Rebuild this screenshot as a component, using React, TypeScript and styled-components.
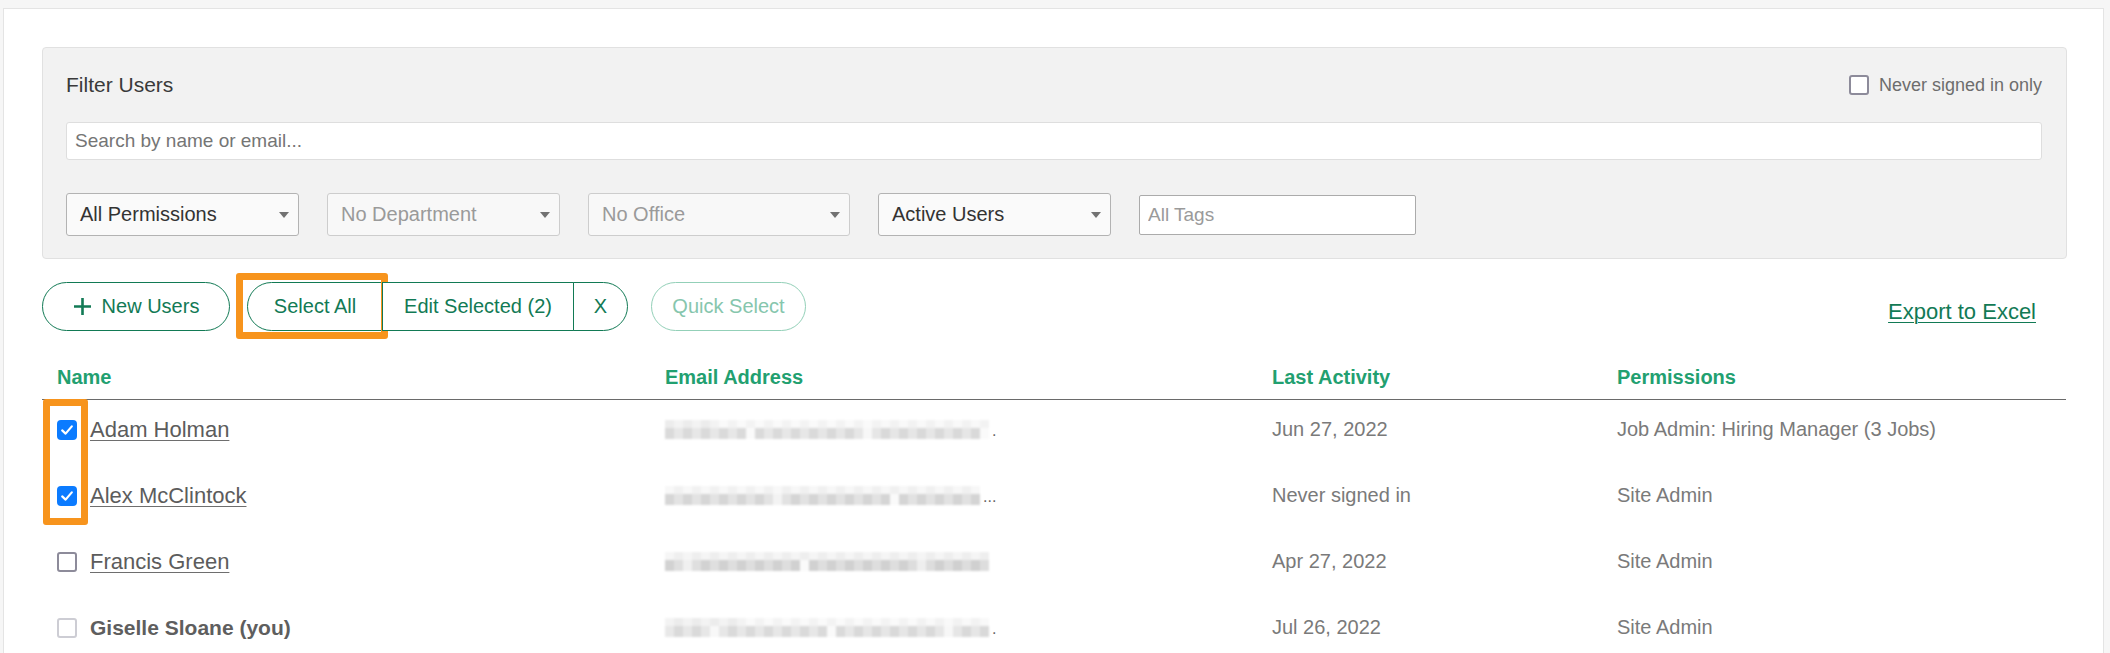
import React from "react";
import styled, { createGlobalStyle, css } from "styled-components";

const GlobalStyle = createGlobalStyle`
  *, *::before, *::after { box-sizing: border-box; }
  html, body { margin: 0; padding: 0; background: #f6f6f6; }
  body { font-family: "Liberation Sans", Arial, Helvetica, sans-serif; color: #333; }
  input { font-family: inherit; }
`;

const GREEN = "#127a55";
const HEAD_GREEN = "#22a070";
const ORANGE = "#f7941d";

const Page = styled.div`
  padding: 8px 0 0 3px;
  height: 653px;
  overflow: hidden;
`;

const Card = styled.div`
  width: 2101px;
  min-height: 700px;
  background: #fff;
  border: 1px solid #e4e4e4;
  border-bottom: none;
  padding: 38px 36px 0 38px;
`;

const FilterPanel = styled.section`
  background: #f2f2f2;
  border: 1px solid #e1e1e1;
  border-radius: 4px;
  padding: 22px 24px 22px 23px;
  display: flex;
  flex-direction: column;
`;

const FilterTop = styled.div`
  height: 30px;
  display: flex;
  align-items: center;
  justify-content: space-between;
`;

const FilterTitle = styled.h2`
  margin: 0;
  font-size: 21px;
  font-weight: 400;
  color: #3a3a3a;
`;

const CheckLabel = styled.label`
  display: flex;
  align-items: center;
  gap: 10px;
  font-size: 18px;
  color: #6d6d6d;
`;

type BoxState = "checked" | "unchecked" | "disabled";

const Box = styled.span<{ $state: BoxState }>`
  width: 20px;
  height: 20px;
  flex: none;
  display: inline-flex;
  align-items: center;
  justify-content: center;
  border-radius: 4px;
  ${(p) =>
    p.$state === "checked"
      ? css`
          background: #0b7bff;
        `
      : p.$state === "unchecked"
      ? css`
          background: #fff;
          border: 2.5px solid #8d8b9a;
          border-radius: 3px;
        `
      : css`
          background: #fff;
          border: 2px solid #cdcdd4;
          border-radius: 3px;
        `}
`;

const CheckBox: React.FC<{ state: BoxState }> = ({ state }) => (
  <Box $state={state}>
    {state === "checked" && (
      <svg width="14" height="14" viewBox="0 0 14 14">
        <polyline
          points="2.2,7.4 5.6,10.6 11.8,3.4"
          fill="none"
          stroke="#fff"
          strokeWidth="2.2"
          strokeLinecap="round"
          strokeLinejoin="round"
        />
      </svg>
    )}
  </Box>
);

const SearchInput = styled.input`
  margin-top: 22px;
  height: 38px;
  width: 100%;
  border: 1px solid #dedede;
  border-radius: 3px;
  background: #fff;
  padding: 0 8px;
  font-size: 19px;
  color: #333;
  outline: none;
  &::placeholder { color: #757575; }
`;

const SelectRow = styled.div`
  margin-top: 33px;
  display: flex;
  align-items: center;
  gap: 28px;
`;

const Select = styled.div<{ $w: number; $disabled?: boolean }>`
  width: ${(p) => p.$w}px;
  height: 43px;
  display: flex;
  align-items: center;
  justify-content: space-between;
  padding: 0 9px 0 13px;
  border-radius: 3px;
  font-size: 20px;
  border: 1px solid ${(p) => (p.$disabled ? "#cdcdcd" : "#b3b3b3")};
  background: ${(p) => (p.$disabled ? "#f8f8f8" : "#fafafa")};
  color: ${(p) => (p.$disabled ? "#9a9a9a" : "#333")};
`;

const Caret = () => (
  <svg width="10" height="6" viewBox="0 0 10 6">
    <polygon points="0,0 10,0 5,6" fill="#727272" />
  </svg>
);

const TagsInput = styled.input`
  width: 277px;
  height: 40px;
  border: 1px solid #ababab;
  border-radius: 2px;
  background: #fff;
  padding: 0 8px;
  font-size: 19px;
  outline: none;
  &::placeholder { color: #9a9a9a; }
`;

const Toolbar = styled.div`
  margin-top: 23px;
  padding-right: 31px;
  display: flex;
  align-items: center;
`;

const PillButton = styled.button<{ $w: number; $muted?: boolean }>`
  width: ${(p) => p.$w}px;
  height: 49px;
  border-radius: 25px;
  border: 1px solid ${(p) => (p.$muted ? "#93d0b8" : GREEN)};
  background: #fff;
  color: ${(p) => (p.$muted ? "#86c6ad" : GREEN)};
  font-family: inherit;
  font-size: 20px;
  display: inline-flex;
  align-items: center;
  justify-content: center;
  gap: 10px;
  padding: 0;
  cursor: pointer;
`;

const Group = styled.div`
  display: flex;
  margin: 0 23px 0 17px;
`;

const Segment = styled.button<{ $w: number; $pos: "first" | "mid" | "last" }>`
  position: relative;
  width: ${(p) => p.$w}px;
  height: 49px;
  border: 1px solid ${GREEN};
  background: #fff;
  color: ${GREEN};
  font-family: inherit;
  font-size: 20px;
  padding: 0;
  display: inline-flex;
  align-items: center;
  justify-content: center;
  cursor: pointer;
  margin-left: ${(p) => (p.$pos === "first" ? 0 : -1)}px;
  border-radius: ${(p) =>
    p.$pos === "first" ? "25px 0 0 25px" : p.$pos === "last" ? "0 25px 25px 0" : "0"};
`;

const Highlight = styled.span`
  position: absolute;
  left: -12px;
  top: -10px;
  right: -6px;
  bottom: -9px;
  border: 7px solid ${ORANGE};
  border-radius: 3px;
  pointer-events: none;
`;

const ExportLink = styled.a`
  margin-left: auto;
  padding-top: 11px;
  font-size: 22px;
  color: ${GREEN};
  text-decoration: underline;
  text-underline-offset: 3px;
  text-decoration-thickness: 1px;
  cursor: pointer;
`;

const Table = styled.div`
  margin-top: 24px;
  width: 2024px;
`;

const cols = css`
  display: grid;
  grid-template-columns: 608px 607px 345px 1fr;
`;

const HeaderRow = styled.div`
  ${cols};
  height: 45px;
  align-items: center;
  border-bottom: 1px solid #6a6a6a;
`;

const HeadCell = styled.div`
  padding-left: 15px;
  font-size: 20px;
  font-weight: 700;
  color: ${HEAD_GREEN};
`;

const Body = styled.div`
  position: relative;
`;

const ColumnHighlight = styled.span`
  position: absolute;
  left: 1px;
  top: -1px;
  width: 45px;
  height: 126px;
  border: 7px solid ${ORANGE};
  border-radius: 3px;
  pointer-events: none;
`;

const Row = styled.div`
  ${cols};
  height: 66px;
  padding-bottom: 7px;
  align-items: center;
`;

const Cell = styled.div`
  padding-left: 15px;
  font-size: 20px;
  color: #7a7a7a;
  display: flex;
  align-items: center;
`;

const NameCell = styled(Cell)`
  gap: 13px;
`;

const NameLink = styled.a<{ $self?: boolean }>`
  font-size: ${(p) => (p.$self ? 21 : 22)}px;
  font-weight: ${(p) => (p.$self ? 700 : 400)};
  color: ${(p) => (p.$self ? "#5e5e5e" : "#5c5c5c")};
  text-decoration: ${(p) => (p.$self ? "none" : "underline")};
  text-decoration-color: #6e6e6e;
  text-decoration-thickness: 1px;
  text-underline-offset: 3px;
`;

const Blur = styled.div<{ $cols: number }>`
  display: grid;
  grid-template-columns: repeat(${(p) => p.$cols}, 9px);
  grid-template-rows: 8px 11px;
  filter: blur(1.2px);
`;

const Pixel = styled.span``;

const Trail = styled.span`
  color: #666;
  font-size: 16px;
  margin-left: 3px;
  align-self: flex-end;
  line-height: 1;
`;

function shadeFor(seed: number, i: number, top: boolean): string {
  let x = (seed * 9301 + i * 49297 + (top ? 233 : 17)) % 233280;
  x = (x * 9301 + 49297) % 233280;
  const r = x / 233280;
  const gap = (i * 7 + seed * 5) % 13 === 0;
  const base = top ? 236 : gap ? 238 : 208;
  const v = Math.round(base + r * (top ? 14 : 26));
  const c = Math.min(250, v);
  return `rgb(${c},${c},${c})`;
}

const EmailBlur: React.FC<{ seed: number; cols: number; trail?: string }> = ({ seed, cols, trail }) => {
  const cells: React.ReactNode[] = [];
  for (let r = 0; r < 2; r++) {
    for (let i = 0; i < cols; i++) {
      cells.push(<Pixel key={`${r}-${i}`} style={{ background: shadeFor(seed, i, r === 0) }} />);
    }
  }
  return (
    <>
      <Blur $cols={cols}>{cells}</Blur>
      {trail && <Trail>{trail}</Trail>}
    </>
  );
};

const users: {
  name: string;
  state: BoxState;
  self?: boolean;
  cols: number;
  trail?: string;
  last: string;
  perm: string;
}[] = [
  { name: "Adam Holman", state: "checked", cols: 36, trail: ".", last: "Jun 27, 2022", perm: "Job Admin: Hiring Manager (3 Jobs)" },
  { name: "Alex McClintock", state: "checked", cols: 35, trail: "...", last: "Never signed in", perm: "Site Admin" },
  { name: "Francis Green", state: "unchecked", cols: 36, last: "Apr 27, 2022", perm: "Site Admin" },
  { name: "Giselle Sloane (you)", state: "disabled", self: true, cols: 36, trail: ".", last: "Jul 26, 2022", perm: "Site Admin" },
];

const PlusIcon = () => (
  <svg width="19" height="19" viewBox="0 0 19 19">
    <path d="M9.5 1v17M1 9.5h17" stroke={GREEN} strokeWidth="2.6" fill="none" />
  </svg>
);

export default function App() {
  return (
    <>
      <GlobalStyle />
      <Page>
        <Card>
          <FilterPanel>
            <FilterTop>
              <FilterTitle>Filter Users</FilterTitle>
              <CheckLabel>
                <CheckBox state="unchecked" />
                Never signed in only
              </CheckLabel>
            </FilterTop>
            <SearchInput placeholder="Search by name or email..." />
            <SelectRow>
              <Select $w={233}>
                All Permissions
                <Caret />
              </Select>
              <Select $w={233} $disabled>
                No Department
                <Caret />
              </Select>
              <Select $w={262} $disabled>
                No Office
                <Caret />
              </Select>
              <Select $w={233}>
                Active Users
                <Caret />
              </Select>
              <TagsInput placeholder="All Tags" />
            </SelectRow>
          </FilterPanel>

          <Toolbar>
            <PillButton $w={188}>
              <PlusIcon />
              New Users
            </PillButton>
            <Group>
              <Segment $w={136} $pos="first">
                Select All
                <Highlight />
              </Segment>
              <Segment $w={192} $pos="mid">Edit Selected (2)</Segment>
              <Segment $w={55} $pos="last">X</Segment>
            </Group>
            <PillButton $w={155} $muted>
              Quick Select
            </PillButton>
            <ExportLink>Export to Excel</ExportLink>
          </Toolbar>

          <Table>
            <HeaderRow>
              <HeadCell>Name</HeadCell>
              <HeadCell>Email Address</HeadCell>
              <HeadCell>Last Activity</HeadCell>
              <HeadCell>Permissions</HeadCell>
            </HeaderRow>
            <Body>
              <ColumnHighlight />
              {users.map((u, idx) => (
                <Row key={u.name}>
                  <NameCell>
                    <CheckBox state={u.state} />
                    <NameLink $self={u.self}>{u.name}</NameLink>
                  </NameCell>
                  <Cell>
                    <EmailBlur seed={idx + 3} cols={u.cols} trail={u.trail} />
                  </Cell>
                  <Cell>{u.last}</Cell>
                  <Cell>{u.perm}</Cell>
                </Row>
              ))}
            </Body>
          </Table>
        </Card>
      </Page>
    </>
  );
}
